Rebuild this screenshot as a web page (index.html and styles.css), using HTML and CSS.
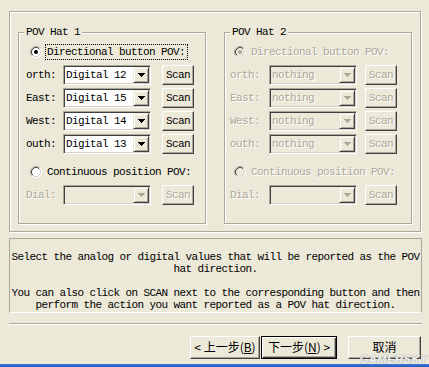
FILE: index.html
```html
<!DOCTYPE html>
<html>
<head>
<meta charset="utf-8">
<link rel="stylesheet" href="styles.css">
</head>
<body>
<div class="dialog">
  <div class="frame">
    <div class="group">
      <span class="group-title">POV Hat 1</span>
      <div class="radio-row">
        <svg class="radio" viewBox="0 0 12 12"><circle cx="6" cy="6" r="5" fill="#fff"/><path d="M2.11 9.89A5.5 5.5 0 0 1 9.89 2.11" fill="none" stroke="#ACA899"/><path d="M9.89 2.11A5.5 5.5 0 0 1 2.11 9.89" fill="none" stroke="#fff"/><path d="M2.82 9.18A4.5 4.5 0 0 1 9.18 2.82" fill="none" stroke="#404040"/><path d="M9.18 2.82A4.5 4.5 0 0 1 2.82 9.18" fill="none" stroke="#D4D0C8"/><circle cx="6" cy="6" r="2" fill="#000"/></svg>
        <span class="rtext focus">Directional button POV:</span>
      </div>
      <div class="row"><span class="lbl">orth:</span><div class="combo"><span class="val">Digital 12</span><span class="drop"><svg width="7" height="4" viewBox="0 0 7 4"><path d="M0 0h7v1h-1v1h-1v1h-1v1h-1v-1h-1v-1h-1v-1h-1z"/></svg></span></div><button class="btn scan">Scan</button></div>
      <div class="row"><span class="lbl">East:</span><div class="combo"><span class="val">Digital 15</span><span class="drop"><svg width="7" height="4" viewBox="0 0 7 4"><path d="M0 0h7v1h-1v1h-1v1h-1v1h-1v-1h-1v-1h-1v-1h-1z"/></svg></span></div><button class="btn scan">Scan</button></div>
      <div class="row"><span class="lbl">West:</span><div class="combo"><span class="val">Digital 14</span><span class="drop"><svg width="7" height="4" viewBox="0 0 7 4"><path d="M0 0h7v1h-1v1h-1v1h-1v1h-1v-1h-1v-1h-1v-1h-1z"/></svg></span></div><button class="btn scan">Scan</button></div>
      <div class="row"><span class="lbl">outh:</span><div class="combo"><span class="val">Digital 13</span><span class="drop"><svg width="7" height="4" viewBox="0 0 7 4"><path d="M0 0h7v1h-1v1h-1v1h-1v1h-1v-1h-1v-1h-1v-1h-1z"/></svg></span></div><button class="btn scan">Scan</button></div>
      <div class="radio-row">
        <svg class="radio" viewBox="0 0 12 12"><circle cx="6" cy="6" r="5" fill="#fff"/><path d="M2.11 9.89A5.5 5.5 0 0 1 9.89 2.11" fill="none" stroke="#ACA899"/><path d="M9.89 2.11A5.5 5.5 0 0 1 2.11 9.89" fill="none" stroke="#fff"/><path d="M2.82 9.18A4.5 4.5 0 0 1 9.18 2.82" fill="none" stroke="#404040"/><path d="M9.18 2.82A4.5 4.5 0 0 1 2.82 9.18" fill="none" stroke="#D4D0C8"/></svg>
        <span class="rtext">Continuous position POV:</span>
      </div>
      <div class="row is-disabled"><span class="lbl">Dial:</span><div class="combo"><span class="val"></span><span class="drop"><svg width="7" height="4" viewBox="0 0 7 4"><path d="M0 0h7v1h-1v1h-1v1h-1v1h-1v-1h-1v-1h-1v-1h-1z"/></svg></span></div><button class="btn scan">Scan</button></div>
    </div>

    <div class="group group--alt is-disabled">
      <span class="group-title">POV Hat 2</span>
      <div class="radio-row">
        <svg class="radio" viewBox="0 0 12 12"><circle cx="6" cy="6" r="5" fill="#ECE9D8"/><path d="M2.11 9.89A5.5 5.5 0 0 1 9.89 2.11" fill="none" stroke="#ACA899"/><path d="M9.89 2.11A5.5 5.5 0 0 1 2.11 9.89" fill="none" stroke="#fff"/><path d="M2.82 9.18A4.5 4.5 0 0 1 9.18 2.82" fill="none" stroke="#404040"/><path d="M9.18 2.82A4.5 4.5 0 0 1 2.82 9.18" fill="none" stroke="#D4D0C8"/><circle cx="6" cy="6" r="2" fill="#ACA899"/></svg>
        <span class="rtext">Directional button POV:</span>
      </div>
      <div class="row"><span class="lbl">orth:</span><div class="combo"><span class="val">nothing</span><span class="drop"><svg width="7" height="4" viewBox="0 0 7 4"><path d="M0 0h7v1h-1v1h-1v1h-1v1h-1v-1h-1v-1h-1v-1h-1z"/></svg></span></div><button class="btn scan">Scan</button></div>
      <div class="row"><span class="lbl">East:</span><div class="combo"><span class="val">nothing</span><span class="drop"><svg width="7" height="4" viewBox="0 0 7 4"><path d="M0 0h7v1h-1v1h-1v1h-1v1h-1v-1h-1v-1h-1v-1h-1z"/></svg></span></div><button class="btn scan">Scan</button></div>
      <div class="row"><span class="lbl">West:</span><div class="combo"><span class="val">nothing</span><span class="drop"><svg width="7" height="4" viewBox="0 0 7 4"><path d="M0 0h7v1h-1v1h-1v1h-1v1h-1v-1h-1v-1h-1v-1h-1z"/></svg></span></div><button class="btn scan">Scan</button></div>
      <div class="row"><span class="lbl">outh:</span><div class="combo"><span class="val">nothing</span><span class="drop"><svg width="7" height="4" viewBox="0 0 7 4"><path d="M0 0h7v1h-1v1h-1v1h-1v1h-1v-1h-1v-1h-1v-1h-1z"/></svg></span></div><button class="btn scan">Scan</button></div>
      <div class="radio-row">
        <svg class="radio" viewBox="0 0 12 12"><circle cx="6" cy="6" r="5" fill="#ECE9D8"/><path d="M2.11 9.89A5.5 5.5 0 0 1 9.89 2.11" fill="none" stroke="#ACA899"/><path d="M9.89 2.11A5.5 5.5 0 0 1 2.11 9.89" fill="none" stroke="#fff"/><path d="M2.82 9.18A4.5 4.5 0 0 1 9.18 2.82" fill="none" stroke="#404040"/><path d="M9.18 2.82A4.5 4.5 0 0 1 2.82 9.18" fill="none" stroke="#D4D0C8"/></svg>
        <span class="rtext">Continuous position POV:</span>
      </div>
      <div class="row"><span class="lbl">Dial:</span><div class="combo"><span class="val"></span><span class="drop"><svg width="7" height="4" viewBox="0 0 7 4"><path d="M0 0h7v1h-1v1h-1v1h-1v1h-1v-1h-1v-1h-1v-1h-1z"/></svg></span></div><button class="btn scan">Scan</button></div>
    </div>
  </div>

  <div class="desc">
    <p>Select the analog or digital values that will be reported as the POV<br>hat direction.</p>
    <p>You can also click on SCAN next to the corresponding button and then<br>perform the action you want reported as a POV hat direction.</p>
  </div>

  <div class="sep"></div>

  <div class="actions">
    <button class="wbtn back">&lt; 上一步(<u>B</u>)</button>
    <button class="wbtn next">下一步(<u>N</u>) &gt;</button>
    <button class="wbtn cancel">取消</button>
  </div>

  <div class="taskbar"></div>
  <div class="watermark">GAMERSKY</div>
</div>
</body>
</html>
```

FILE: styles.css
```css
* { box-sizing: border-box; }

body {
  margin: 0;
  background: #ECE9D8;
  font-family: "Liberation Mono", monospace;
  font-size: 11px;
  letter-spacing: -0.6px;
  color: #000;
}

.dialog {
  position: relative;
  width: 429px;
  height: 367px;
  overflow: hidden;
  display: flex;
  flex-direction: column;
}

.dialog > * { flex: none; }

.frame {
  margin: 11px 0 0 9px;
  width: 412px;
  height: 221px;
  border: 1px solid #ACA899;
  box-shadow: inset 1px 1px #fff, 1px 1px #fff;
  padding: 20px 8px 0 8px;
  display: flex;
  gap: 18px;
  align-items: flex-start;
}

.group {
  position: relative;
  width: 188px;
  height: 192px;
  border: 1px solid #ACA899;
  box-shadow: inset 1px 1px #fff, 1px 1px #fff;
  padding-top: 11px;
  display: flex;
  flex-direction: column;
}

.group-title {
  position: absolute;
  top: -7px;
  left: 5px;
  padding: 0 2px;
  line-height: 12px;
  background: #ECE9D8;
  color: #000;
  text-shadow: none;
}

.radio-row {
  display: flex;
  align-items: center;
  height: 16px;
  padding-left: 11px;
}

.radio {
  width: 12px;
  height: 12px;
  margin-right: 3px;
  flex: none;
}

.rtext {
  line-height: 14px;
  padding-left: 1px;
  border: 1px solid transparent;
  white-space: nowrap;
}

.focus {
  border: 1px dotted #000;
  padding-right: 2px;
}

.row {
  display: flex;
  align-items: center;
  height: 20px;
  margin-top: 3px;
  padding-left: 7px;
}

.radio-row + .row { margin-top: 5px; }
.row + .radio-row { margin-top: 10px; }

.lbl {
  width: 37px;
  flex: none;
  white-space: nowrap;
}

.combo {
  width: 88px;
  height: 20px;
  flex: none;
  border: 1px solid;
  border-color: #ACA899 #fff #fff #ACA899;
  box-shadow: inset 1px 1px #404040, inset -1px -1px #D4D0C8;
  background: #fff;
  display: flex;
  align-items: center;
  padding: 1px 1px 1px 2px;
}

.val {
  flex: 1;
  white-space: nowrap;
  overflow: hidden;
}

.drop {
  width: 16px;
  height: 16px;
  flex: none;
  background: #ECE9D8;
  border: 1px solid;
  border-color: #ECE9D8 #404040 #404040 #ECE9D8;
  box-shadow: inset 1px 1px #fff, inset -1px -1px #ACA899;
  display: flex;
  align-items: center;
  justify-content: center;
}

.drop svg { fill: #000; display: block; }

.btn {
  font: inherit;
  letter-spacing: inherit;
  color: inherit;
  background: #ECE9D8;
  border: 1px solid;
  border-color: #fff #404040 #404040 #fff;
  box-shadow: inset -1px -1px #ACA899;
  padding: 0;
  margin: 0;
}

.scan {
  width: 32px;
  height: 20px;
  margin-left: 11px;
  flex: none;
}

.is-disabled .lbl,
.is-disabled .rtext,
.is-disabled .val,
.is-disabled .btn {
  color: #ACA899;
  text-shadow: 1px 1px #fff;
}

.is-disabled .combo { background: #ECE9D8; }
.is-disabled .drop svg { fill: #ACA899; }

.group--alt .radio-row { padding-left: 9px; }
.group--alt .row { padding-left: 5px; }
.group--alt .lbl { width: 39px; }
.group--alt .scan { margin-left: 8px; }

.desc {
  margin: 6px 0 0 9px;
  width: 413px;
  height: 75px;
  border: 1px solid;
  border-color: #ACA899 #ACA899 #fff #ACA899;
  padding-top: 12px;
  text-align: center;
  line-height: 12px;
  white-space: nowrap;
}

.desc p { margin: 0; }
.desc p + p { margin-top: 12px; }

.sep {
  margin: 10px 0 0 9px;
  width: 413px;
  height: 2px;
  border-top: 1px solid #ACA899;
  border-bottom: 1px solid #fff;
}

.actions {
  display: flex;
  height: 23px;
  margin-top: 11px;
  padding-left: 190px;
}

.wbtn {
  height: 23px;
  font-family: "Noto Sans CJK SC", sans-serif;
  font-size: 12px;
  letter-spacing: 0;
  color: #000;
  background: #ECE9D8;
  border: 1px solid;
  border-color: #fff #404040 #404040 #fff;
  box-shadow: inset -1px -1px #ACA899;
  padding: 0 0 2px;
  margin: 0;
  line-height: 18px;
  flex: none;
}

.back { width: 70px; }

.next {
  width: 76px;
  margin-left: 1px;
  border-color: #000;
  box-shadow: inset 1px 1px #fff, inset -1px -1px #404040, inset -2px -2px #ACA899;
}

.cancel {
  width: 73px;
  margin-left: 11px;
}

.taskbar {
  margin-top: 5px;
  height: 3px;
  background: linear-gradient(#3D78D6, #2457C4);
}

.watermark {
  position: absolute;
  right: 1px;
  bottom: 3px;
  font-family: "Liberation Sans", sans-serif;
  font-weight: bold;
  font-style: italic;
  font-size: 11px;
  line-height: 10px;
  letter-spacing: 0.6px;
  color: #f4f4f4;
  text-shadow: 0 0 1px #9a9a9a, 0 0 1px #9a9a9a;
}
```
